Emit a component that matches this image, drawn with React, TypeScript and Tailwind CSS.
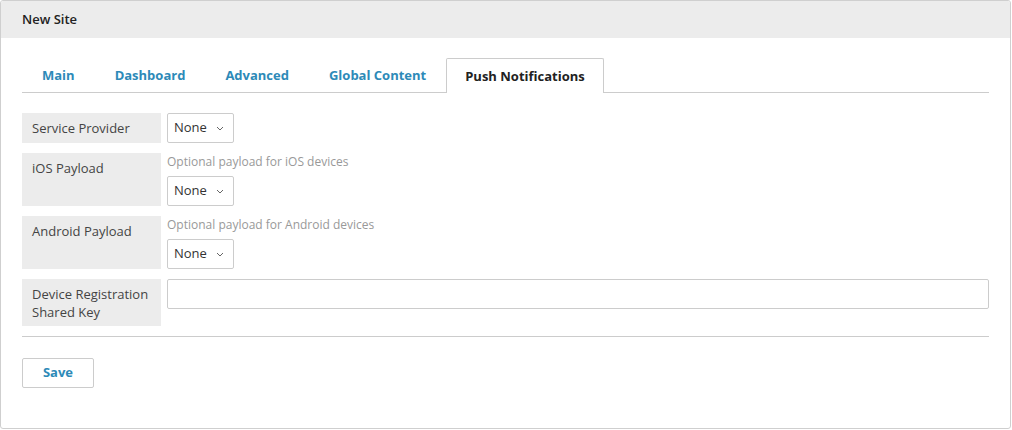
import React from "react";

function Select() {
  return (
    <div className="flex h-[30px] w-[67px] items-center justify-between rounded-[2px] border border-[#cccccc] bg-white pl-[6px] pr-[9px] text-[13px] text-[#333]">
      <span>None</span>
      <svg width="8" height="5" viewBox="0 0 8 5" fill="none">
        <path d="M1 1l3 3 3-3" stroke="#666" strokeWidth="1" />
      </svg>
    </div>
  );
}

function Label({ children, className = "" }: { children: React.ReactNode; className?: string }) {
  return (
    <div className={"w-[139px] shrink-0 bg-[#ececec] px-[10px] text-[13px] leading-[18px] text-[#444] " + className}>
      {children}
    </div>
  );
}

export default function App() {
  const tabs = ["Main", "Dashboard", "Advanced", "Global Content"];
  return (
    <div
      className="h-[429px] w-[1011px] overflow-hidden rounded-[3px] border border-[#cfcfcf] bg-white"
      style={{ fontFamily: '"Open Sans", "Noto Sans", sans-serif' }}
    >
      <div className="flex h-[37px] items-center bg-[#ececec] pl-[21px] pt-[1px] text-[13px] font-semibold text-[#222]">
        New Site
      </div>
      <div className="px-[21px] pt-[20px]">
        <div className="flex h-[35px] items-end border-b border-[#cccccc]">
          {tabs.map((t) => (
            <div
              key={t}
              className="flex h-[34px] items-center px-[20px] pt-[1px] text-[13px] font-bold text-[#2d8ab8]"
            >
              {t}
            </div>
          ))}
          <div className="-mb-px flex h-[35px] items-center rounded-t-[2px] border border-b-0 border-[#cccccc] bg-white px-[18px] pt-[1px] text-[13px] font-bold text-[#222]">
            Push Notifications
          </div>
        </div>

        <div className="mt-[20px] flex flex-col gap-[10px]">
          <div className="flex gap-[6px]">
            <Label className="flex h-[30px] items-center">Service Provider</Label>
            <Select />
          </div>
          <div className="flex gap-[6px]">
            <Label className="h-[53px] pt-[6px]">iOS Payload</Label>
            <div className="flex flex-col">
              <div className="h-[17px] pt-[1px] text-[12px] leading-[16px] text-[#999]">Optional payload for iOS devices</div>
              <div className="mt-[6px]">
                <Select />
              </div>
            </div>
          </div>
          <div className="flex gap-[6px]">
            <Label className="h-[53px] pt-[6px]">Android Payload</Label>
            <div className="flex flex-col">
              <div className="h-[17px] pt-[1px] text-[12px] leading-[16px] text-[#999]">Optional payload for Android devices</div>
              <div className="mt-[6px]">
                <Select />
              </div>
            </div>
          </div>
          <div className="flex gap-[6px]">
            <Label className="h-[47px] pt-[6px]">
              Device Registration
              <br />
              Shared Key
            </Label>
            <div className="h-[30px] flex-1 rounded-[2px] border border-[#cccccc] bg-white" />
          </div>
        </div>

        <div className="mt-[10px] border-t border-[#cccccc]" />

        <button className="mt-[21px] h-[30px] w-[72px] rounded-[2px] border border-[#cccccc] bg-white text-[13px] font-bold text-[#2d8ab8]">
          Save
        </button>
      </div>
    </div>
  );
}
